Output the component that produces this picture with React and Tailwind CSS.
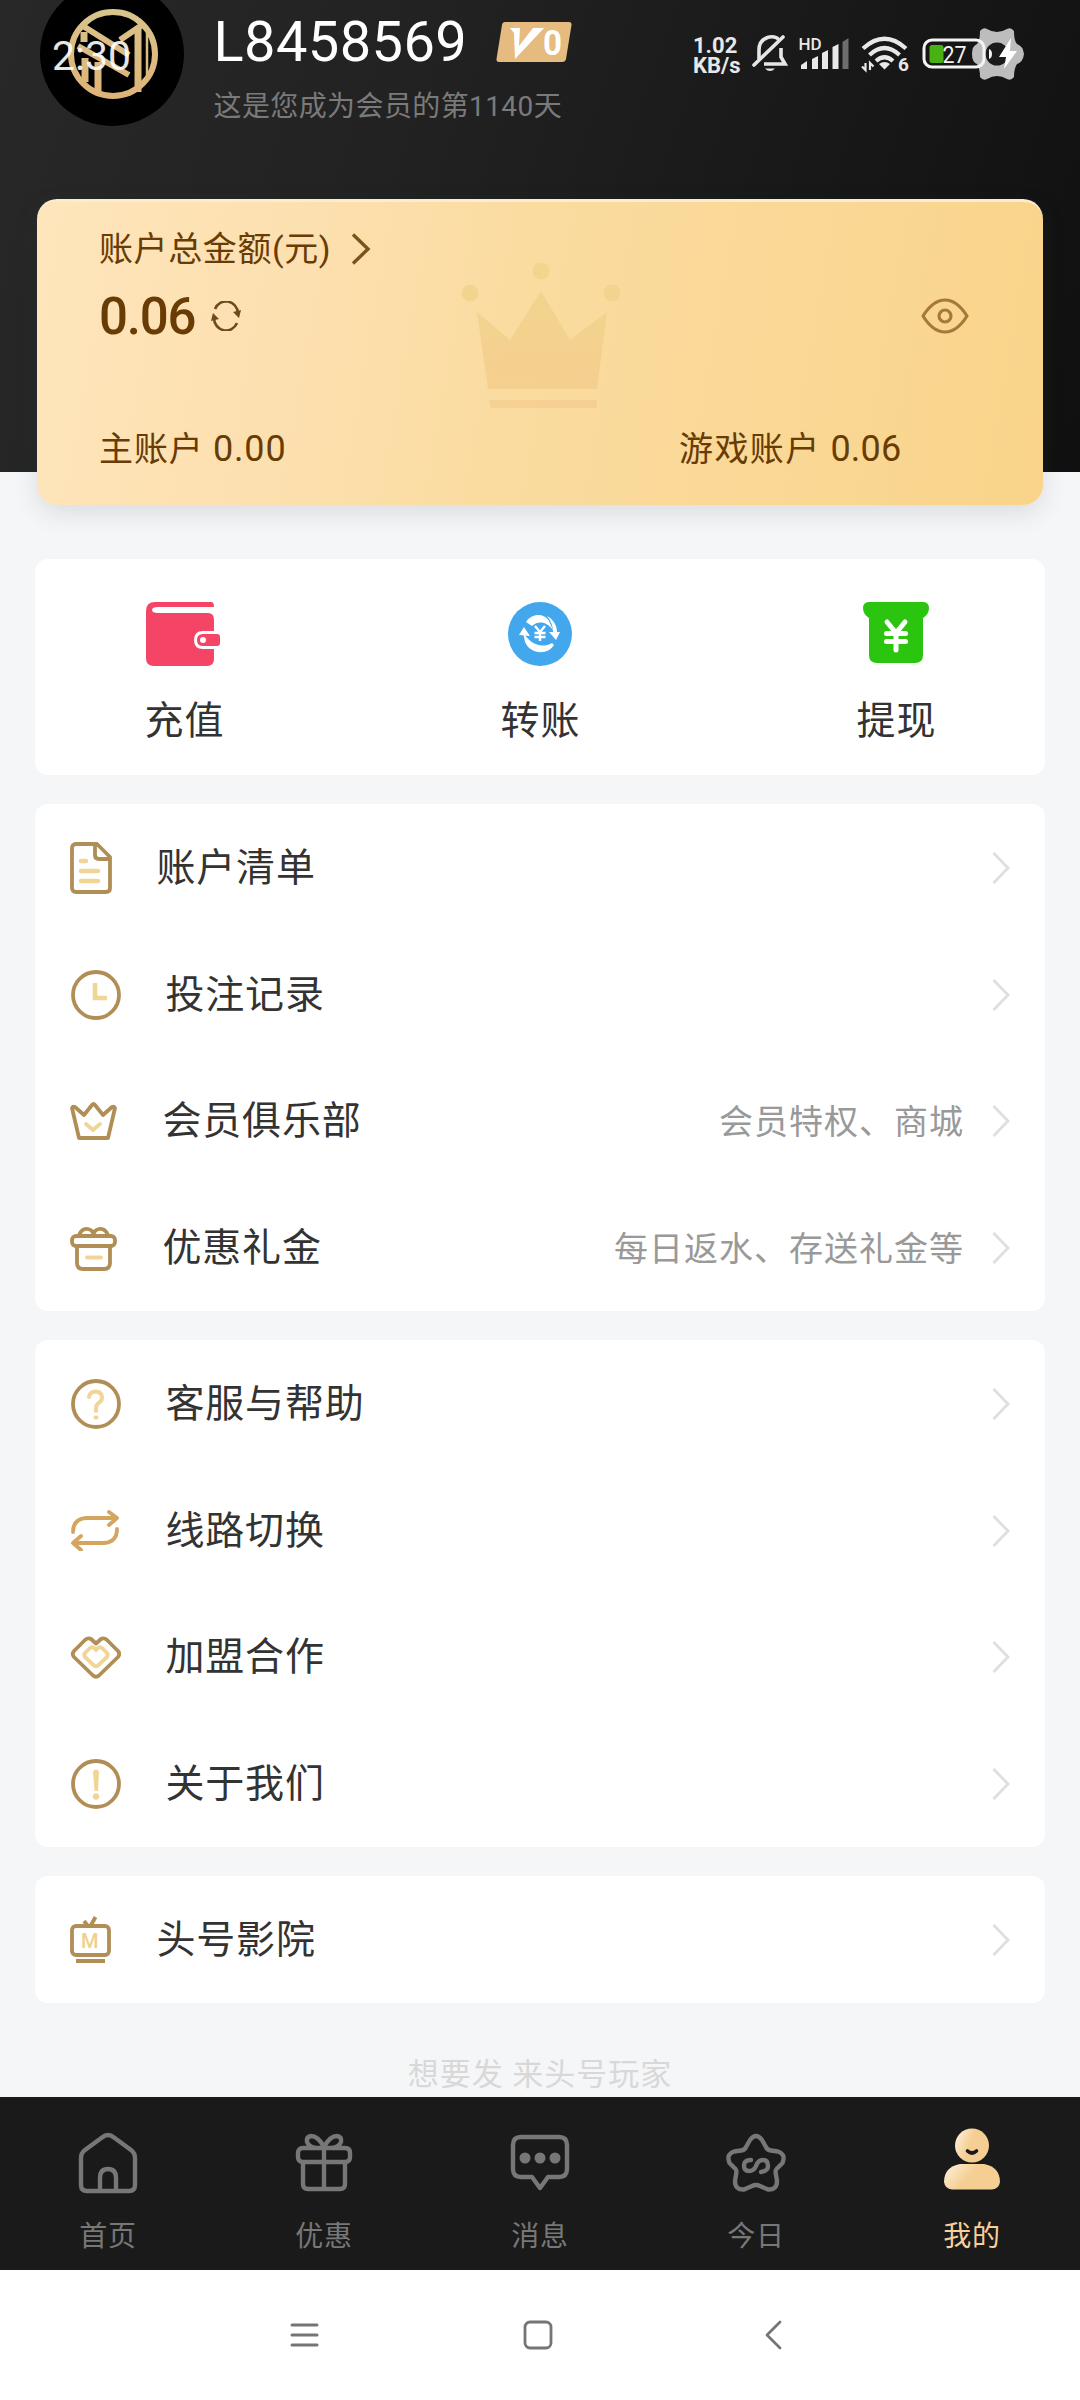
const BROWN = '#b08e56';
const PALE = '#f1d596';

function AvatarLogo() {
  return (
    <svg width="144" height="144" viewBox="0 0 144 144" fill="none">
      <defs>
        <linearGradient id="logo" gradientUnits="userSpaceOnUse" x1="0" y1="28" x2="0" y2="116">
          <stop offset="0" stopColor="#d8c48c" />
          <stop offset="1" stopColor="#dfb377" />
        </linearGradient>
      </defs>
      <circle cx="72" cy="72" r="72" fill="#000" />
      <g stroke="url(#logo)" strokeWidth="6">
        <circle cx="73" cy="72" r="42" />
        <path d="M43 44 L89 73 M38 64 L89 93" />
        <path d="M44 50 V60 M45 76 V100 M58 80 V112 M98 45 V110" strokeWidth="7" />
        <path d="M102 43 L80 58" />
        <path d="M107 50 V96" strokeWidth="2.500" />
      </g>
    </svg>
  );
}

function MutedBell() {
  return (
    <svg width="36" height="40" viewBox="0 0 36 40" fill="none" stroke="#e6e6e6" strokeWidth="3.600">
      <path d="M7 25 V16 C7 2 23 0 27 6 M29 14 V23 L33 30 H12" />
      <path d="M2 31 L31 3" strokeLinecap="round" />
      <path d="M13 34.500 H23 Q18 39.500 13 34.500Z" fill="#e6e6e6" stroke="none" />
    </svg>
  );
}

function Signal() {
  return (
    <svg className="overflow-visible" width="50" height="34" viewBox="0 0 50 34" fill="#e8e8e8">
      <path d="M1 32 V28 L7 24 V32Z M12 32 V22 L18 19 V32Z M22 32 V16 L28 13 V32Z M32.500 32 V10 L38.500 7 V32Z" />
      <path d="M42.500 32 V5 L48.500 1 V32Z" fill="#6d6d6d" />
      <text x="-1.500" y="12.500" fontSize="17" fontWeight="500" fill="#e8e8e8">HD</text>
    </svg>
  );
}

function Wifi() {
  return (
    <svg className="overflow-visible" width="48" height="38" viewBox="0 0 48 38" fill="none" stroke="#e8e8e8" strokeWidth="4.200">
      <path d="M2 13.500 Q23.500 -6 45 13.500 M8.500 20 Q23.500 6 38.500 20 M15 26 Q23.500 18.500 32 26" />
      <path d="M18 29 Q23.500 25 29 29 L23.500 34.500Z" fill="#e8e8e8" stroke="none" />
      <path d="M4.500 28 V35 L1 31.500 M9 35 V28 L12.500 31.500" strokeWidth="2.200" />
      <text x="37" y="35.500" fontSize="19" fontWeight="700" fill="#e8e8e8" stroke="none">6</text>
    </svg>
  );
}

function Battery() {
  return (
    <svg width="104" height="56" viewBox="0 0 104 56">
      <path
        d="M58 5 Q61 1 65 3 Q75 9 85 3 Q89 1 92 5 Q92 15 95 18 Q101 20 102 28 Q101 36 95 38 Q92 42 92 51 Q89 55 85 53 Q75 47 65 53 Q61 55 58 51 Q58 42 55 38 Q50 36 50 28 Q50 20 55 18 Q58 15 58 5Z"
        fill="#bdbdbd"
      />
      <circle cx="75" cy="28" r="11.500" fill="#1b1b1b" />
      <rect x="2" y="14" width="60" height="27" rx="8" fill="none" stroke="#f4f4f4" strokeWidth="3" />
      <rect x="7.500" y="19" width="14" height="18" rx="2.500" fill="#49b112" />
      <path d="M67 23 Q70 24 70 28 Q70 32 67 33Z" fill="#f4f4f4" />
      <path d="M89 12 L77 31 H84 L82 43 L95 25 H88Z" fill="#fff" />
      <text x="20.500" y="36.500" fontSize="24" fill="#f4f4f4" textLength="24" lengthAdjust="spacingAndGlyphs">27</text>
    </svg>
  );
}

function StatusBar() {
  return (
    <div className="absolute inset-x-0 top-0 flex h-[108px] items-center justify-between pr-[54px] pl-[52px] text-[#e8e8e8]">
      <span className="pt-[4px] text-[41px] leading-none text-white/90">2:30</span>
      <div className="flex items-center">
        <div className="flex w-[59px] flex-col pt-[4px] text-[22px] leading-[20px] font-bold">
          <span>1.02</span>
          <span>KB/s</span>
        </div>
        <MutedBell />
        <span className="w-[12px]" />
        <Signal />
        <span className="w-[11px]" />
        <Wifi />
        <span className="w-[13px]" />
        <Battery />
      </div>
    </div>
  );
}

function Header() {
  return (
    <header className="flex h-[199px] pl-[40px]">
      <div className="-mt-[18px]">
        <AvatarLogo />
      </div>
      <div className="ml-[29.500px] flex flex-col">
        <div className="flex h-[83px] items-center">
          <span className="text-[56px] leading-none tracking-[0.400px] text-white">L8458569</span>
          <svg className="ml-[29px] overflow-visible" width="76" height="40" viewBox="0 0 76 40">
            <path d="M9 0 H73 Q76 0 75.500 3 L70 37 Q69.500 40 66 40 H3 Q0 40 .5 37 L6 3 Q6.500 0 9 0Z" fill="#e6bb80" />
            <path d="M14 6 H24 L23 24 L37 6 H48 L19 37 L18 11Z" fill="#fff" />
            <text x="47" y="32.500" fontSize="35" fontWeight="700" fill="#fff" textLength="19" lengthAdjust="spacingAndGlyphs">0</text>
          </svg>
        </div>
        <span className="mt-[8px] text-[28px] leading-[32px] tracking-[0.400px] text-[#7a7a7a]">这是您成为会员的第1140天</span>
      </div>
    </header>
  );
}

function CrownMark() {
  return (
    <svg className="absolute left-[423px] top-[57px]" width="164" height="156" viewBox="0 0 164 156">
      <defs>
        <linearGradient id="crown" gradientUnits="userSpaceOnUse" x1="0" y1="10" x2="0" y2="130">
          <stop offset="0" stopColor="#f0d58c" />
          <stop offset="1" stopColor="#f5cd8c" />
        </linearGradient>
      </defs>
      <g fill="url(#crown)" opacity=".85">
        <circle cx="10" cy="34" r="8.500" />
        <circle cx="81" cy="12" r="8.500" />
        <circle cx="152" cy="34" r="8.500" />
        <path d="M17 53 L50 81 L81 32 L110 81 L147 53 L137 130 H28Z" />
      </g>
      <path d="M29 141 H137 V149 H31Z" fill="#f3cc8e" opacity=".7" />
    </svg>
  );
}

function BalanceCard() {
  return (
    <section className="relative mx-[37px] h-[306px] w-[1006px] rounded-[20px] border-t-3 border-[#fdebcd] bg-[linear-gradient(100deg,#fee5bb_0%,#fde0b0_25%,#fadca0_48%,#fad999_65%,#f9d48a_100%)] px-[62px] text-[#683c04] shadow-[0_8px_24px_rgba(60,70,80,0.14)]">
      <CrownMark />
      <div className="relative flex h-[94px] items-center text-[34px] tracking-[0.600px]">
        <span>账户总金额(元)</span>
        <svg className="ml-[20px]" width="20" height="32" viewBox="0 0 20 32" fill="none" stroke="#7b541c" strokeWidth="3.400">
          <path d="M2 1.500 L17 16 L2 30.500" />
        </svg>
      </div>
      <div className="relative -mt-[13px] flex h-[66px] items-center">
        <span className="text-[51px] leading-none font-medium tracking-[-1.200px]">0.06</span>
        <svg className="ml-[15px]" width="32" height="30" viewBox="0 0 32 30" fill="none" stroke="#704a18" strokeWidth="2.600">
          <path d="M5 8 A12 12.500 0 0 1 28 12 M27 22 A12 12.500 0 0 1 4 17" />
          <path d="M23 11 L31 9 L29 17Z M1 20 L3 12 L9 18Z" fill="#704a18" stroke="none" />
        </svg>
        <svg className="mr-[11px] ml-auto" width="50" height="38" viewBox="0 0 50 38" fill="none" stroke="#a5793b" strokeWidth="3.200">
          <path d="M3 19 Q13 3 25 3 T47 19 Q37 35 25 35 T3 19Z" strokeLinejoin="round" />
          <circle cx="25" cy="19" r="6" />
        </svg>
      </div>
      <div className="relative mt-[68px] flex h-[64px] items-center text-[34px]">
        <span className="w-[580px] tracking-[0.900px]">
          主账户 <span className="text-[36px] tracking-[0.800px]">0.00</span>
        </span>
        <span className="tracking-[1.400px]">
          游戏账户 <span className="text-[36px] tracking-[0.200px]">0.06</span>
        </span>
      </div>
    </section>
  );
}

function WalletIcon() {
  return (
    <svg width="76" height="64" viewBox="0 0 76 64">
      <path d="M9 0 H65 Q68 0 68 5 H12 Q6 5 6 8 Q6 11 12 11 H62 Q68 11 68 18 V57 Q68 64 61 64 H8 Q0 64 0 56 V9 Q0 0 9 0Z" fill="#f44566" />
      <path d="M57 29 H76 V47 H57 Q48 47 48 38 Q48 29 57 29Z" fill="#fff" />
      <path d="M57 32 H71 Q74 32 74 35 V41 Q74 44 71 44 H57 Q51 44 51 38 Q51 32 57 32Z" fill="#f44566" />
      <circle cx="57" cy="38" r="3" fill="#fff" />
    </svg>
  );
}

function TransferIcon() {
  return (
    <svg width="64" height="64" viewBox="0 0 64 64" fill="none">
      <circle cx="32" cy="32" r="32" fill="#42a7ec" />
      <path d="M18 20 C24 11 36 11 41 19 L45 28 C39 20 31 18 24 24Z M46 43 C39 54 22 52 17 40 L15 30 C22 42 33 47 44 41Z" fill="#fff" />
      <path d="M39 14 C46 18 49 24 49 30 L52 30 L48 38 L41 30 L45 30 C45 24 43 19 39 14Z M11 33 L16 25 L22 34Z" fill="#fff" />
      <path d="M27 24 L32 30 L37 24 M32 30 V39 M26.500 31 H37.500 M26.500 35 H37.500" stroke="#fff" strokeWidth="2.400" />
    </svg>
  );
}

function WithdrawIcon() {
  return (
    <svg width="68" height="64" viewBox="0 0 68 64" fill="none">
      <path d="M6 0 H62 Q67 1 67 6 Q67 12 61 16 V53 Q61 61 53 61 H15 Q7 61 7 53 V16 Q1 12 1 6 Q1 1 6 0Z" fill="#2bc40f" />
      <path d="M25 20 L34 31 L43 20 M34 31 V48 M24.500 31.500 H43.500 M24.500 39.500 H43.500" stroke="#fff" strokeWidth="5" strokeLinecap="round" />
    </svg>
  );
}

const quickActions = [
  { label: '充值', Icon: WalletIcon },
  { label: '转账', Icon: TransferIcon },
  { label: '提现', Icon: WithdrawIcon },
];

function QuickActions() {
  return (
    <section className="mx-[35px] mt-[55px] flex h-[216px] justify-between rounded-[13px] bg-white px-[109px] pt-[43px]">
      {quickActions.map(({ label, Icon }) => (
        <div key={label} className="flex w-[80px] flex-col items-center">
          <Icon />
          <span className="mt-[33px] -mr-[1px] text-[39px] leading-[44px] tracking-[1px] text-[#333]">{label}</span>
        </div>
      ))}
    </section>
  );
}

function Line({ w, h, children }) {
  return (
    <svg width={w} height={h} viewBox={`0 0 ${w} ${h}`} fill="none" stroke={BROWN} strokeWidth="3.800" strokeLinejoin="round" strokeLinecap="round">
      {children}
    </svg>
  );
}

const DocIcon = () => (
  <Line w={42} h={52}>
    <path d="M5 2 H27 L40 15 V46 Q40 50 36 50 H6 Q2 50 2 46 V6 Q2 2 6 2 M25 3 V13 Q25 17 29 17 H39" />
    <path d="M11 19 H16 M11 29 H28 M11 39 H28" stroke={PALE} strokeWidth="4.500" />
  </Line>
);

const ClockIcon = () => (
  <Line w={51} h={50}>
    <circle cx="26" cy="25" r="23" />
    <path d="M25 13 V28 H37" stroke={PALE} strokeWidth="4.600" strokeLinecap="butt" strokeLinejoin="miter" />
  </Line>
);

const CrownIcon = () => (
  <Line w={48} h={38}>
    <path d="M2 6 L9 36 H38 L45 6 Q44 4 42 5 L33 13 L25 3 Q23.500 1 22 3 L14 13 L5 5 Q3 4 2 6Z" />
    <path d="M16 22 L23 28 L30 22" stroke={PALE} />
  </Line>
);

const GiftIcon = () => (
  <Line w={48} h={45}>
    <rect x="2" y="10" width="43" height="10" rx="4" />
    <path d="M7 21 V37 Q7 43 13 43 H34 Q40 43 40 37 V21 M9 9 Q12 2 18 3 Q23 4 23.500 9 Q24 4 29 3 Q35 2 38 9" />
    <path d="M17 31.500 H31" stroke={PALE} />
  </Line>
);

const HelpIcon = () => (
  <Line w={51} h={50}>
    <circle cx="26" cy="25" r="23" />
    <path d="M19 18 Q20 12.500 26 12.500 Q32 13 32 18.500 Q32 22 28 24.500 Q26 26 26 30 V32 M25.500 38.500 H26.500" stroke={PALE} strokeWidth="4" />
  </Line>
);

const SwitchIcon = () => (
  <Line w={51} h={41}>
    <g stroke="#d3a55f">
      <path d="M3 22 Q3 9 16 8 H46 M39 2 L47 8 L39 15" />
      <path d="M47 19 Q47 32 34 33 H4 M11 26 L3 33 L11 40" />
    </g>
  </Line>
);

const PartnerIcon = () => (
  <Line w={51} h={43}>
    <path d="M4 15 L15 4 Q18 1.500 21 3 L26 7.500 L31 3 Q34 1.500 37 4 L48 15 Q50.500 18 48 21 L29 39.500 Q26 42 23 39.500 L4 21 Q1.500 18 4 15Z" />
    <path d="M15 17 L20 12 Q23 10 26 14 Q29 10 32 12 L37 17 Q38.500 19 37 21 L28 29.500 Q26 31 24 29.500 L15 21 Q13.500 19 15 17Z" stroke={PALE} />
  </Line>
);

const AboutIcon = () => (
  <Line w={51} h={50}>
    <circle cx="26" cy="25" r="23" />
    <path d="M23 12.500 Q26 8.500 29 12.500 L28 32 H24.500Z" fill={PALE} stroke="none" />
    <circle cx="26" cy="37.500" r="3.200" fill={PALE} stroke="none" />
  </Line>
);

const CinemaIcon = () => (
  <Line w={42} h={48}>
    <rect x="2" y="10" width="37" height="29" rx="4" />
    <path d="M14 5 L18 10 M25.500 1 L20.500 10 M6 45 H35" strokeLinecap="butt" />
    <text x="11" y="31.500" fontSize="20" fontWeight="500" fill="#efd08a" stroke="none">M</text>
  </Line>
);

const groups = [
  [
    { label: '账户清单', Icon: DocIcon },
    { label: '投注记录', Icon: ClockIcon },
    { label: '会员俱乐部', Icon: CrownIcon, hint: '会员特权、商城' },
    { label: '优惠礼金', Icon: GiftIcon, hint: '每日返水、存送礼金等' },
  ],
  [
    { label: '客服与帮助', Icon: HelpIcon },
    { label: '线路切换', Icon: SwitchIcon },
    { label: '加盟合作', Icon: PartnerIcon },
    { label: '关于我们', Icon: AboutIcon },
  ],
  [{ label: '头号影院', Icon: CinemaIcon }],
];

function MenuRow({ label, Icon, hint }) {
  return (
    <div className="flex h-[126.750px] items-center px-[35px] pt-px">
      <Icon />
      <span className="mt-[1px] ml-[44.500px] text-[39px] leading-none tracking-[0.800px] text-[#333]">{label}</span>
      <span className="mt-[1px] mr-[28px] ml-auto text-[34px] leading-none tracking-[1px] text-[#999]">{hint}</span>
      <svg width="18" height="32" viewBox="0 0 18 32" fill="none" stroke="#dfdfdf" strokeWidth="2.800">
        <path d="M1.500 1 L16 16 L1.500 31" />
      </svg>
    </div>
  );
}

const HomeTab = () => (
  <path d="M30 3 Q33 3 36 5.500 L53 18 Q57 21 57 26 V53 Q57 59 51 59 H9 Q3 59 3 53 V26 Q3 21 7 18 L24 5.500 Q27 3 30 3Z M22 58 V46 Q22 37 30 37 Q38 37 38 46 V58" />
);

const GiftTab = () => (
  <path d="M9 16 H51 Q56 16 56 21 V25 Q56 30 51 30 H9 Q4 30 4 25 V21 Q4 16 9 16Z M9 30 V52 Q9 57 14 57 H46 Q51 57 51 52 V30 M30 15 V57 M30 15 Q24 4 17 4 Q12 5 13 10 Q15 15 22 16 M30 15 Q36 4 43 4 Q48 5 47 10 Q45 15 38 16" />
);

const MessageTab = () => (
  <>
    <path d="M11 5 H49 Q57 5 57 13 V37 Q57 45 49 45 H38 L30 56 L22 45 H11 Q3 45 3 37 V13 Q3 5 11 5Z" />
    <g fill="#777" stroke="none">
      <circle cx="15" cy="26" r="5.500" />
      <circle cx="30" cy="26" r="5.500" />
      <circle cx="45" cy="26" r="5.500" />
    </g>
  </>
);

const TodayTab = () => (
  <>
    <path d="M24 8 Q30 0 36 8 L40 15 Q41 18 45 18.500 L52 19.500 Q60 22 56.500 31 L50.500 37 Q49 39 50 43 L51 49 Q51 58 42 57.500 L34 54 Q30 52 26 54 L18 57.500 Q9 58 9 49 L10 43 Q11 39 9.500 37 L3.500 31 Q0 22 8 19.500 L15 18.500 Q19 18 20 15Z" />
    <path d="M25 28 Q18 28 18 33.500 Q18 39 23 39 Q28 39 30 34 Q32 28 37 28 Q42 28 42 34 Q42 39 35 40" />
  </>
);

const MeTab = () => (
  <g stroke="none">
    <defs>
      <linearGradient id="me" x1="0" y1="0.300" x2="1" y2="0.700">
        <stop offset="0" stopColor="#fcecd2" />
        <stop offset="0.450" stopColor="#f5ce93" />
        <stop offset="1" stopColor="#f5ce93" />
      </linearGradient>
    </defs>
    <circle cx="30" cy="13.500" r="17" fill="url(#me)" />
    <path d="M18 32 H42 Q58 35 58 50 Q57 57 50 57.500 H10 Q3 57 2 50 Q2 35 18 32Z" fill="url(#me)" />
    <path d="M25.500 19 Q30 23 34.500 19" fill="none" stroke="#1a1a1a" strokeWidth="3.600" strokeLinecap="round" />
  </g>
);

const tabs = [
  { label: '首页', Icon: HomeTab },
  { label: '优惠', Icon: GiftTab },
  { label: '消息', Icon: MessageTab },
  { label: '今日', Icon: TodayTab },
  { label: '我的', Icon: MeTab, active: true },
];

function TabBar() {
  return (
    <nav className="flex h-[173px] bg-[#1a1a1a]">
      {tabs.map(({ label, Icon, active }) => (
        <div key={label} className="flex flex-1 flex-col items-center pt-[35px]">
          <svg width="60" height="62" viewBox="0 0 60 62" className="overflow-visible" fill="none" stroke="#777" strokeWidth="4.400" strokeLinejoin="round" strokeLinecap="round">
            <Icon />
          </svg>
          <span className={`mt-[27px] text-[28px] leading-[32px] tracking-[0.800px] ${active ? 'text-[#f7cf9a]' : 'text-[#777]'}`}>
            {label}
          </span>
        </div>
      ))}
    </nav>
  );
}

function SystemNav() {
  return (
    <div className="flex h-[130px] items-center bg-white pl-[289px]">
      <svg width="31" height="32" viewBox="0 0 31 32" stroke="#757575" strokeWidth="3" strokeLinecap="round">
        <path d="M3 6 H28 M3 16 H28 M3 26 H28" />
      </svg>
      <svg className="ml-[203px]" width="30" height="30" viewBox="0 0 30 30" fill="none" stroke="#757575" strokeWidth="2.800">
        <rect x="2" y="2" width="26" height="26" rx="5" />
      </svg>
      <svg className="ml-[211px]" width="20" height="32" viewBox="0 0 20 32" fill="none" stroke="#757575" strokeWidth="2.800" strokeLinecap="round" strokeLinejoin="round">
        <path d="M16 3 L3 16 L16 29" />
      </svg>
    </div>
  );
}

export default function App() {
  return (
    <div className="relative flex h-[2400px] w-[1080px] flex-col overflow-hidden bg-[#f5f6f8] font-[Roboto,'Noto_Sans_CJK_SC',sans-serif]">
      <div className="h-[472px] bg-[linear-gradient(110deg,#282828_0%,#222_35%,#181818_70%,#101010_100%)]">
        <Header />
        <BalanceCard />
      </div>
      <main className="flex flex-1 flex-col pt-[32px]">
        <QuickActions />
        {groups.map((rows) => (
          <section key={rows[0].label} className="mx-[35px] mt-[29px] rounded-[13px] bg-white">
            {rows.map((row) => (
              <MenuRow key={row.label} {...row} />
            ))}
          </section>
        ))}
        <p className="mt-[54px] text-center text-[31px] leading-[36px] tracking-[1px] text-[#d8d8d8]">想要发 来头号玩家</p>
      </main>
      <TabBar />
      <SystemNav />
      <StatusBar />
    </div>
  );
}
